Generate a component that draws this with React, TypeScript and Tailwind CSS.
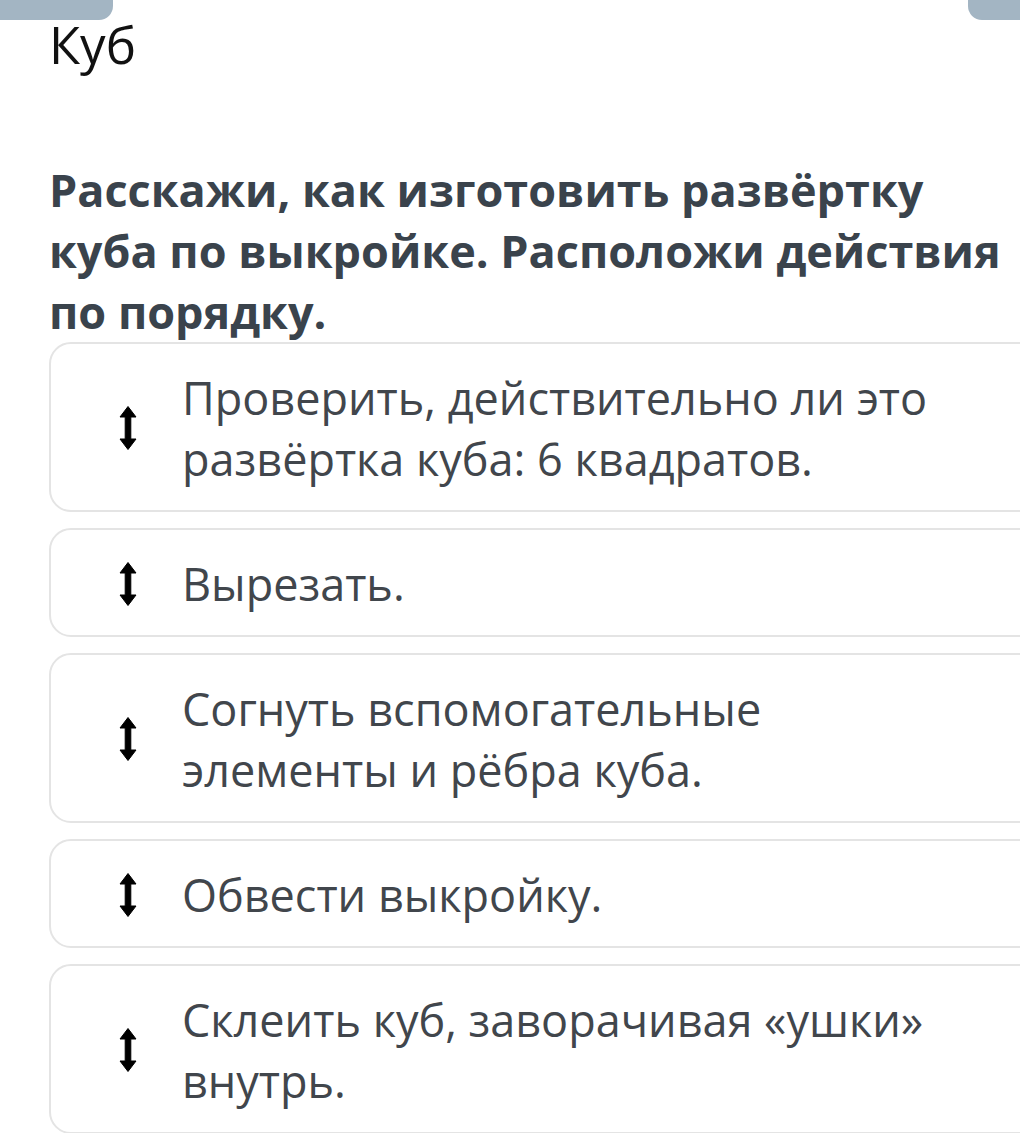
import React from 'react'

const steps: string[][] = [
  ['Проверить, действительно ли это', 'развёртка куба: 6 квадратов.'],
  ['Вырезать.'],
  ['Согнуть вспомогательные', 'элементы и рёбра куба.'],
  ['Обвести выкройку.'],
  ['Склеить куб, заворачивая «ушки»', 'внутрь.'],
]

const DragArrow = () => (
  <svg width="18" height="44" viewBox="0 0 18 44" className="shrink-0">
    <path d="M9 0.5 L17 11 L11.8 11 L11.8 33 L17 33 L9 43.5 L1 33 L6.2 33 L6.2 11 L1 11 Z" fill="#000" stroke="#000" strokeWidth="1" strokeLinejoin="round" />
  </svg>
)

const App: React.FC = () => {
  return (
    <div className="w-[1020px] h-[1133px] overflow-hidden bg-white" style={{ fontFamily: '"Open Sans", "Noto Sans", sans-serif' }}>
      <div className="flex justify-between h-[20px]">
        <div className="w-[113px] h-[20px] bg-[#a3b5c3] rounded-br-[14px]" />
        <div className="w-[52px] h-[20px] bg-[#a3b5c3] rounded-bl-[14px]" />
      </div>
      <div className="pl-[49px]">
        <div className="-mt-[1px] text-[51px] leading-none text-[#111]">Куб</div>
        <h2 className="mt-[89px] text-[45px] leading-[61px] font-bold text-[#3a434c]">
          Расскажи, как изготовить развёртку<br />
          куба по выкройке. Расположи действия<br />
          по порядку.
        </h2>
        <div className="flex flex-col gap-[16px]">
          {steps.map((lines, i) => (
            <div key={i} className="w-[1000px] flex items-center border-2 border-[#e4e4e4] rounded-[22px] pl-[68px] pt-[23px] pb-[21px]">
              <DragArrow />
              <div className="ml-[45px] text-[45px] leading-[61px] text-[#41464c]">
                {lines.map((l, j) => (
                  <div key={j}>{l}</div>
                ))}
              </div>
            </div>
          ))}
        </div>
      </div>
    </div>
  )
}

export default App
